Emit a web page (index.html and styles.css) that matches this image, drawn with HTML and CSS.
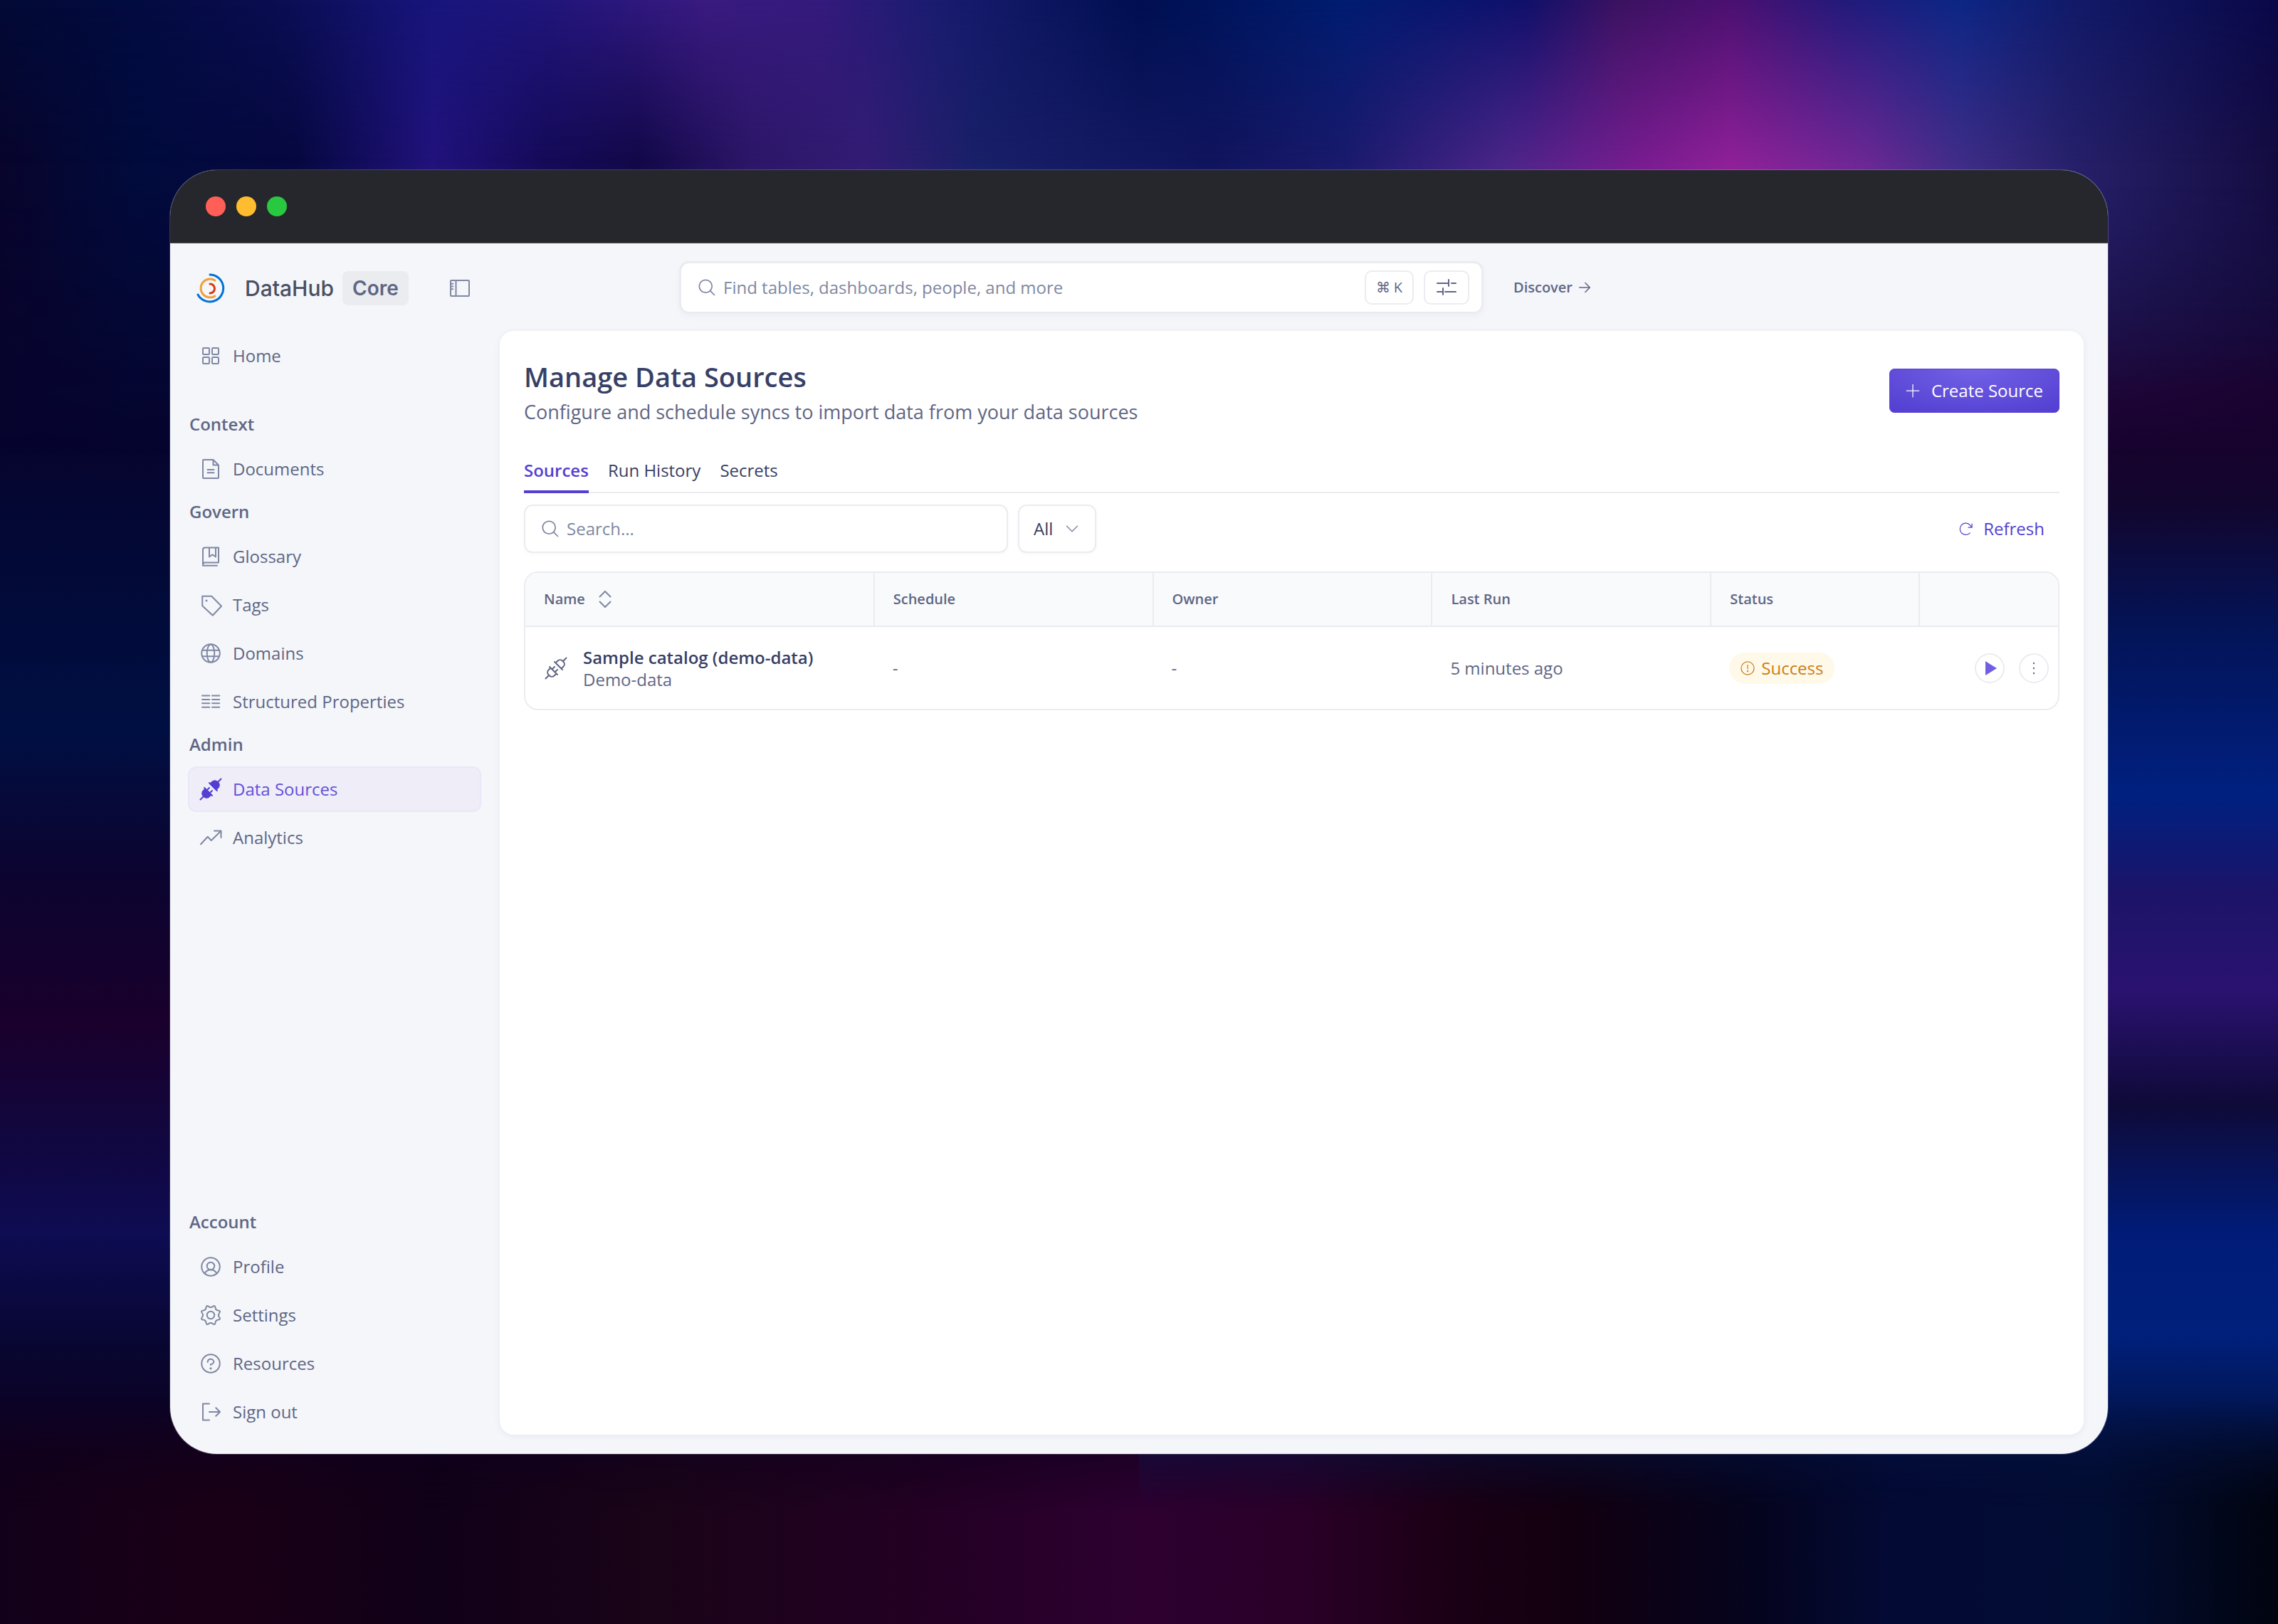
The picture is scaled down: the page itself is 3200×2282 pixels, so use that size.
FILE: index.html
```html
<!DOCTYPE html>
<html lang="en">
<head>
<meta charset="utf-8">
<title>Manage Data Sources - DataHub Core</title>
<meta name="viewport" content="width=device-width, initial-scale=1">
<link rel="stylesheet" href="styles.css">
</head>
<body class="desktop">
<svg class="sprite" aria-hidden="true">
  <symbol id="i-home" viewBox="0 0 256 256"><rect x="40" y="40" width="72" height="72" rx="10"/><rect x="144" y="40" width="72" height="72" rx="10"/><rect x="40" y="144" width="72" height="72" rx="10"/><rect x="144" y="144" width="72" height="72" rx="10"/></symbol>
  <symbol id="i-sidebar" viewBox="0 0 256 256"><rect x="24" y="40" width="208" height="176" rx="8"/><path d="M84 40v176M28 78h22M28 108h22M28 138h22"/></symbol>
  <symbol id="i-doc" viewBox="0 0 256 256"><path d="M208 232H48a8 8 0 0 1-8-8V32a8 8 0 0 1 8-8h108l60 60v140a8 8 0 0 1-8 8ZM156 24v60h60M92 136h72M92 170h72"/></symbol>
  <symbol id="i-book" viewBox="0 0 256 256"><path d="M40 220a24 24 0 0 1 24-24h152V28H64a24 24 0 0 0-24 24ZM40 216v14h160M184 28v104l-36-26-36 26V28"/></symbol>
  <symbol id="i-tag" viewBox="0 0 256 256"><path d="M34 30H138L248 142 150 246 34 138Z"/><circle class="dot" cx="80" cy="80" r="12"/></symbol>
  <symbol id="i-globe" viewBox="0 0 256 256"><circle cx="128" cy="128" r="102"/><ellipse cx="128" cy="128" rx="42" ry="100"/><path d="M34 94h188M34 162h188"/></symbol>
  <symbol id="i-columns" viewBox="0 0 256 256"><path d="M32 60h82M32 103h82M32 146h82M32 189h82M144 60h82M144 103h82M144 146h82M144 189h82"/></symbol>
  <symbol id="i-plug-fill" viewBox="0 0 256 256"><path class="solid" d="M124 68l24-24a37 37 0 0 1 52 0l12 12a37 37 0 0 1 0 52l-24 24ZM68 124l-24 24a37 37 0 0 0 0 52l12 12a37 37 0 0 0 52 0l24-24Z"/><path d="M112 56l88 88M206 50l38-38M56 112l88 88M50 206l-38 38M84 140l28-28M116 172l28-28"/></symbol>
  <symbol id="i-plug" viewBox="0 0 256 256"><path d="M124 68l24-24a37 37 0 0 1 52 0l12 12a37 37 0 0 1 0 52l-24 24M68 124l-24 24a37 37 0 0 0 0 52l12 12a37 37 0 0 0 52 0l24-24M112 56l88 88M206 50l38-38M56 112l88 88M50 206l-38 38M84 140l28-28M116 172l28-28"/></symbol>
  <symbol id="i-trend" viewBox="0 0 256 256"><path d="M240 56L134 160 94 118 16 202M168 52h76v76"/></symbol>
  <symbol id="i-user" viewBox="0 0 256 256"><circle cx="128" cy="128" r="102"/><circle cx="128" cy="120" r="42"/><path d="M60 204a76 76 0 0 1 136 0"/></symbol>
  <symbol id="i-gear" viewBox="0 0 256 256"><path d="M225 104Q206 128 225 152 244 176 213 180 183 183 180 213 176 244 152 225 128 206 104 225 80 244 76 213 73 183 43 180 12 176 31 152 50 128 31 104 12 80 43 76 73 73 76 43 80 12 104 31 128 50 152 31 176 12 180 43 183 73 213 76 244 80 225 104Z"/><circle cx="128" cy="128" r="42"/></symbol>
  <symbol id="i-help" viewBox="0 0 256 256"><circle cx="128" cy="128" r="102"/><path d="M128 144v-8c18 0 34-12 34-28s-15-30-34-30-34 13-34 30v4"/><circle class="dot" cx="128" cy="182" r="13"/></symbol>
  <symbol id="i-out" viewBox="0 0 256 256"><path d="M112 36H40v184h72M112 128h120M186 82l46 46-46 46"/></symbol>
  <symbol id="i-search" viewBox="0 0 256 256"><circle cx="112" cy="112" r="82"/><path d="M172 172l52 52"/></symbol>
  <symbol id="i-down" viewBox="0 0 256 256"><path d="M208 88l-80 80-80-80"/></symbol>
  <symbol id="i-right" viewBox="0 0 256 256"><path d="M24 128h208M140 36l92 92-92 92"/></symbol>
  <symbol id="i-plus" viewBox="0 0 256 256"><path d="M16 128h224M128 16v224"/></symbol>
  <symbol id="i-refresh" viewBox="0 0 256 256"><path d="M244 40v64h-64M208 204A104 104 0 1 1 200 52l44 52"/></symbol>
  <symbol id="i-sort" viewBox="0 0 18 26"><path d="M1 10l8-8 8 8M1 16l8 8 8-8"/></symbol>
  <symbol id="i-sliders" viewBox="0 0 28 24"><path d="M1 6h16M17 1v9M21 6h6M1 18h8M9 13v9M12 18h15"/></symbol>
  <symbol id="i-warn" viewBox="0 0 256 256"><circle cx="128" cy="128" r="116"/><path d="M128 70v70"/><circle class="dot" cx="128" cy="180" r="15"/></symbol>
  <symbol id="i-play" viewBox="0 0 20 20"><path class="solid" d="M4 0l16 10-16 10Z"/></symbol>
  <symbol id="i-more" viewBox="0 0 20 20"><circle class="dot" cx="10" cy="3" r="1.2"/><circle class="dot" cx="10" cy="10" r="1.2"/><circle class="dot" cx="10" cy="17" r="1.2"/></symbol>
</svg>

<div class="backdrop" aria-hidden="true"><span class="glow upper"></span><span class="glow top"></span><span class="glow bottom"></span></div>

<div class="window">
  <div class="titlebar"><span class="light red"></span><span class="light amber"></span><span class="light green"></span></div>
  <div class="app">
    <aside class="sidebar">
      <div class="brand">
        <svg class="logo" viewBox="0 0 40 42" aria-hidden="true"><path stroke="#0072d6" d="M19 2a19 19 0 1 1-17 28"/><path stroke="#efa13a" d="M26 10a13 13 0 1 0 0 22"/><path stroke="#d93a0c" d="M19 15a6 6 0 0 1 0 13"/></svg>
        <span class="brand-name">DataHub</span>
        <span class="brand-badge">Core</span>
        <button class="plain toggle" aria-label="Toggle sidebar"><svg class="icon"><use href="#i-sidebar"/></svg></button>
      </div>
      <nav class="nav">
        <a class="nav-item" href="#"><svg class="icon"><use href="#i-home"/></svg>Home</a>
        <h2 class="nav-heading spaced">Context</h2>
        <a class="nav-item" href="#"><svg class="icon"><use href="#i-doc"/></svg>Documents</a>
        <h2 class="nav-heading">Govern</h2>
        <a class="nav-item" href="#"><svg class="icon"><use href="#i-book"/></svg>Glossary</a>
        <a class="nav-item" href="#"><svg class="icon"><use href="#i-tag"/></svg>Tags</a>
        <a class="nav-item" href="#"><svg class="icon"><use href="#i-globe"/></svg>Domains</a>
        <a class="nav-item" href="#"><svg class="icon"><use href="#i-columns"/></svg>Structured Properties</a>
        <h2 class="nav-heading">Admin</h2>
        <a class="nav-item active" href="#" aria-current="page"><svg class="icon"><use href="#i-plug-fill"/></svg>Data Sources</a>
        <a class="nav-item" href="#"><svg class="icon"><use href="#i-trend"/></svg>Analytics</a>
        <h2 class="nav-heading bottom-group">Account</h2>
        <a class="nav-item" href="#"><svg class="icon"><use href="#i-user"/></svg>Profile</a>
        <a class="nav-item" href="#"><svg class="icon"><use href="#i-gear"/></svg>Settings</a>
        <a class="nav-item" href="#"><svg class="icon"><use href="#i-help"/></svg>Resources</a>
        <a class="nav-item" href="#"><svg class="icon"><use href="#i-out"/></svg>Sign out</a>
      </nav>
    </aside>

    <div class="main">
      <header class="topbar">
        <div class="global-search">
          <svg class="icon mid"><use href="#i-search"/></svg>
          <input type="text" class="field" aria-label="Search everything" placeholder="Find tables, dashboards, people, and more">
          <button class="key">⌘ K</button>
          <button class="key filter" aria-label="Filters"><svg class="sliders"><use href="#i-sliders"/></svg></button>
        </div>
        <a class="discover" href="#">Discover <svg class="icon tiny"><use href="#i-right"/></svg></a>
      </header>

      <main class="card">
        <div class="page-head">
          <div>
            <h1 class="title">Manage Data Sources</h1>
            <p class="subtitle">Configure and schedule syncs to import data from your data sources</p>
          </div>
          <button class="create"><svg class="icon small"><use href="#i-plus"/></svg>Create Source</button>
        </div>

        <div class="tabs" role="tablist">
          <button class="tab selected" role="tab" aria-selected="true">Sources</button>
          <button class="tab" role="tab" aria-selected="false">Run History</button>
          <button class="tab" role="tab" aria-selected="false">Secrets</button>
        </div>

        <div class="toolbar">
          <div class="search">
            <svg class="icon mid"><use href="#i-search"/></svg>
            <input type="text" class="field" aria-label="Search sources" placeholder="Search...">
          </div>
          <div class="select">
            <select class="select-field" aria-label="Source type"><option>All</option></select>
            <svg class="icon caret"><use href="#i-down"/></svg>
          </div>
          <button class="plain refresh"><svg class="icon small"><use href="#i-refresh"/></svg>Refresh</button>
        </div>

        <div class="table-frame">
          <table class="table">
            <colgroup><col class="c-name"><col class="c-wide"><col class="c-wide"><col class="c-wide"><col class="c-status"><col></colgroup>
            <thead>
              <tr><th><span class="sortable">Name<svg class="sort"><use href="#i-sort"/></svg></span></th><th>Schedule</th><th>Owner</th><th>Last Run</th><th>Status</th><th></th></tr>
            </thead>
            <tbody>
              <tr>
                <td><div class="source"><svg class="icon"><use href="#i-plug"/></svg><div><div class="source-name">Sample catalog (demo-data)</div><div>Demo-data</div></div></div></td>
                <td>-</td>
                <td>-</td>
                <td>5 minutes ago</td>
                <td><span class="pill"><svg class="icon small"><use href="#i-warn"/></svg>Success</span></td>
                <td class="actions-cell"><div class="actions"><button class="round play" aria-label="Run"><svg class="glyph"><use href="#i-play"/></svg></button><button class="round" aria-label="More"><svg class="glyph"><use href="#i-more"/></svg></button></div></td>
              </tr>
            </tbody>
          </table>
        </div>
      </main>
    </div>
  </div>
</div>
</body>
</html>
```

FILE: styles.css
```css
:root {
  --purple: #533fd1;
  --ink: #374066;
  --text: #5f6685;
  --muted: #8088a3;
  --line: #ebecf0;
  --surface: #f4f6fa;
}

* { box-sizing: border-box; }

.desktop {
  position: relative;
  isolation: isolate;
  margin: 0;
  min-height: 100vh;
  padding: 239px;
  display: flex;
  font: 500 24px/32px "Open Sans", "Noto Sans", sans-serif;
  color: var(--text);
}

/* Wallpaper: two vertical washes for the sides, three horizontal ones for top and bottom */
.backdrop {
  position: absolute;
  inset: 0;
  z-index: -1;
  overflow: hidden;
  background:
    linear-gradient(180deg, #08042c 10%, #06042e 27%, #020a38 36%, #000f42 45%, #0c0430 54%, #1a002c 63%, #12063c 69%, #0e0c52 76%, #080630 83%, #10001c 91%, #150018 100%) left / 50% 100% no-repeat,
    linear-gradient(180deg, #1a1250 10%, #160a38 18%, #1c002c 24%, #12062e 31%, #031458 39%, #002080 49%, #1c1468 55%, #2a1270 61%, #0f0a38 68%, #001c78 76%, #00207c 82%, #04103c 90%, #010314 100%) right / 50% 100% no-repeat;
}
.glow { position: absolute; left: 0; right: 0; }
.upper {
  top: 0;
  height: 28%;
  background: linear-gradient(90deg, #08042c 0%, #010b3c 6%, #060840 13%, #21127c 19%, #140a58 24%, #120848 28%, #2c1668 33%, #331c74 38%, #182068 43%, #10145c 53%, #191a6c 59%, #4a2588 66%, #781c90 72%, #8f2098 76%, #6a2894 82%, #3f2d88 86%, #26206a 91%, #140c40 100%);
  mask-image: linear-gradient(#000 40%, transparent);
}
.top {
  top: 0;
  height: 10%;
  background: linear-gradient(90deg, #020a35 0%, #020b40 6%, #0a0d50 12%, #17157c 19%, #20157a 24%, #3a1a80 31%, #341a7c 36%, #1a1c70 41%, #000f50 50%, #001c70 59%, #10106a 67%, #3a1260 71%, #4a1070 76%, #221a7a 81%, #0c2684 86%, #121a68 91%, #0a0848 100%);
  mask-image: linear-gradient(#000, transparent);
}
.bottom {
  bottom: 0;
  height: 14%;
  background: linear-gradient(90deg, #12001a 0%, #1a0016 10%, #100018 19%, #1a0418 29%, #230024 41%, #2d0030 50%, #2a0028 57%, #1a0014 64%, #120010 69%, #05041e 77%, #030a34 83%, #020d34 92%, #01040f 100%);
  mask-image: linear-gradient(transparent, #000 50%);
}

.sprite { display: none; }

.icon {
  width: 32px;
  height: 32px;
  flex: none;
  fill: none;
  stroke: currentColor;
  stroke-width: 16;
  stroke-linecap: round;
  stroke-linejoin: round;
}
.icon.mid { width: 28px; height: 28px; }
.icon.small { width: 20px; height: 20px; }
.icon.caret { width: 24px; height: 24px; }
.icon.tiny { width: 18px; height: 18px; stroke-width: 22; }
.dot { fill: currentColor; stroke: none; }
.solid { fill: currentColor; }

button, input, select { font: inherit; color: inherit; }
button { cursor: pointer; }
.plain { border: 0; padding: 0; background: none; }

.window {
  flex: 1;
  min-width: 0;
  display: flex;
  flex-direction: column;
  overflow: hidden;
  border-radius: 66px;
  background: var(--surface);
  box-shadow: 0 0 0 1px #ffffff30;
}

.titlebar {
  display: flex;
  align-items: center;
  gap: 15px;
  height: 103px;
  padding: 0 50px;
  background: #26272c;
  border-bottom: 1px solid #55565a;
}
.light { width: 28px; height: 28px; border-radius: 50%; }
.red { background: #ff5f57; }
.amber { background: #febc2e; }
.green { background: #28c840; }

.app {
  flex: 1;
  display: grid;
  grid-template-columns: 463px minmax(0, 1fr);
}

.sidebar {
  display: flex;
  flex-direction: column;
  padding: 0 26px 27px 25px;
}
.brand {
  display: flex;
  align-items: center;
  height: 126px;
  padding: 0 14px 0 12px;
}
.logo {
  width: 40px;
  height: 42px;
  margin-right: 28px;
  fill: none;
  stroke-width: 3;
  stroke-linecap: round;
}
.brand-name, .brand-badge { font-family: Inter, sans-serif; }
.brand-name { color: #4a4f61; font-size: 30px; font-weight: 500; margin-right: 12px; }
.brand-badge {
  padding: 8px 14px;
  border-radius: 8px;
  background: #ebecf0;
  font-size: 28px;
  font-weight: 600;
}
.toggle { display: flex; margin-left: auto; color: var(--muted); }

.nav { flex: 1; display: flex; flex-direction: column; }
.nav-item {
  display: flex;
  align-items: center;
  gap: 15px;
  height: 64px;
  padding: 0 14px;
  border: 2px solid transparent;
  border-radius: 12px;
  color: var(--text);
  text-decoration: none;
}
.nav-item + .nav-item { margin-top: 4px; }
.nav-item .icon { color: var(--muted); }
.nav-item.active {
  background: #eeedf8;
  border-color: #e9e7f9;
  color: #6550d8;
}
.nav-item.active .icon { color: var(--purple); }
.nav-heading {
  margin: 0;
  padding: 12px 2px 15px;
  font-size: 24px;
  font-weight: 600;
}
.nav-heading.spaced { margin-top: 36px; }
.nav-heading.bottom-group { margin-top: auto; }

.main { display: flex; flex-direction: column; padding: 0 34px 27px 0; }

.topbar {
  display: flex;
  align-items: center;
  gap: 42px;
  height: 123px;
  margin-right: -34px;
  padding-left: 252px;
}
.global-search {
  width: 1130px;
  max-width: 70%;
  display: flex;
  align-items: center;
  height: 74px;
  padding: 0 17px 0 22px;
  border: 3px solid var(--line);
  border-radius: 14px;
  background: #fff;
  box-shadow: 0 4px 8px #3740660a;
  color: var(--muted);
}
.field {
  flex: 1;
  min-width: 0;
  margin-left: 9px;
  padding: 0;
  border: 0;
  outline: 0;
  background: none;
  font-weight: 400;
}
.field::placeholder { color: var(--muted); opacity: 1; }
.key {
  height: 48px;
  padding: 0 14px;
  border: 2px solid var(--line);
  border-radius: 10px;
  background: #fff;
  color: var(--text);
  font-size: 20px;
}
.filter { display: flex; align-items: center; margin-left: 14px; padding: 0 16px; }
.sliders { width: 28px; height: 24px; stroke: currentColor; stroke-width: 2; stroke-linecap: round; }
.discover {
  display: flex;
  align-items: center;
  gap: 8px;
  color: var(--text);
  font-size: 20px;
  font-weight: 600;
  text-decoration: none;
}

.card {
  flex: 1;
  padding: 40px 34px;
  border-radius: 20px;
  background: #fff;
  box-shadow: 0 2px 8px #37406614;
}
.page-head { display: flex; justify-content: space-between; align-items: center; }
.title { margin: 0; color: var(--ink); font-size: 38px; line-height: 48px; font-weight: 600; }
.subtitle { margin: 8px 0 0; font-size: 27px; line-height: 36px; font-weight: 400; }
.create {
  display: flex;
  align-items: center;
  gap: 16px;
  height: 62px;
  margin-bottom: 4px;
  padding: 0 22px;
  border: 1px solid var(--purple);
  border-radius: 7px;
  background: radial-gradient(ellipse 80% 120% at 50% 0, #7361e6, var(--purple));
  color: #fff;
}

.tabs { display: flex; gap: 27px; margin-top: 36px; border-bottom: 2px solid var(--line); }
.tab {
  height: 60px;
  margin-bottom: -2px;
  padding: 0;
  border: 0;
  border-bottom: 4px solid transparent;
  background: none;
  color: var(--ink);
}
.tab.selected { color: var(--purple); border-color: var(--purple); font-weight: 600; }

.toolbar { display: flex; align-items: center; gap: 14px; margin-top: 16px; }
.search, .select {
  height: 68px;
  border: 2px solid var(--line);
  border-radius: 12px;
  box-shadow: 0 2px 4px #37406608;
  color: var(--muted);
}
.search { display: flex; align-items: center; width: 680px; padding: 0 21px; }
.select { display: grid; align-items: center; width: 110px; }
.select-field, .select .caret { grid-area: 1 / 1; }
.select-field {
  appearance: none;
  height: 100%;
  padding: 0 20px;
  border: 0;
  outline: 0;
  background: none;
  color: var(--ink);
}
.select .caret { justify-self: end; margin-right: 20px; pointer-events: none; }
.refresh { display: flex; align-items: center; gap: 15px; margin-left: auto; padding: 0 21px; color: var(--purple); }

.table-frame { margin-top: 26px; border: 2px solid var(--line); border-radius: 20px; overflow: hidden; }
.table { width: 100%; table-layout: fixed; border-collapse: separate; border-spacing: 0; }
.c-name { width: 22.7%; }
.c-wide { width: 18.2%; }
.c-status { width: 13.6%; }
.table th {
  height: 76px;
  padding: 0 27px 0 26px;
  border-bottom: 2px solid var(--line);
  background: #f9fafc;
  font-size: 20px;
  font-weight: 600;
  text-align: left;
}
.table th + th { border-left: 2px solid var(--line); }
.table td { height: 115px; padding: 0 27px; font-weight: 400; }
.sortable { display: flex; align-items: center; gap: 19px; }
.sort { width: 18px; height: 26px; fill: none; stroke: var(--muted); stroke-width: 2; }
.source { display: flex; align-items: center; gap: 22px; }
.source > div { line-height: 31px; }
.source-name { color: var(--ink); font-weight: 600; white-space: nowrap; }
.pill {
  display: inline-flex;
  align-items: center;
  gap: 9px;
  height: 44px;
  padding: 0 16px;
  border-radius: 22px;
  background: #fff9ea;
  color: #cc7d14;
}
.table .actions-cell { padding: 0 13px; }
.actions { display: flex; justify-content: flex-end; gap: 20px; }
.round {
  display: flex;
  align-items: center;
  justify-content: center;
  width: 42px;
  height: 42px;
  padding: 0;
  border: 2px solid var(--line);
  border-radius: 50%;
  background: #fff;
}
.glyph { width: 20px; height: 20px; }
.play { color: #705ee4; }
```
